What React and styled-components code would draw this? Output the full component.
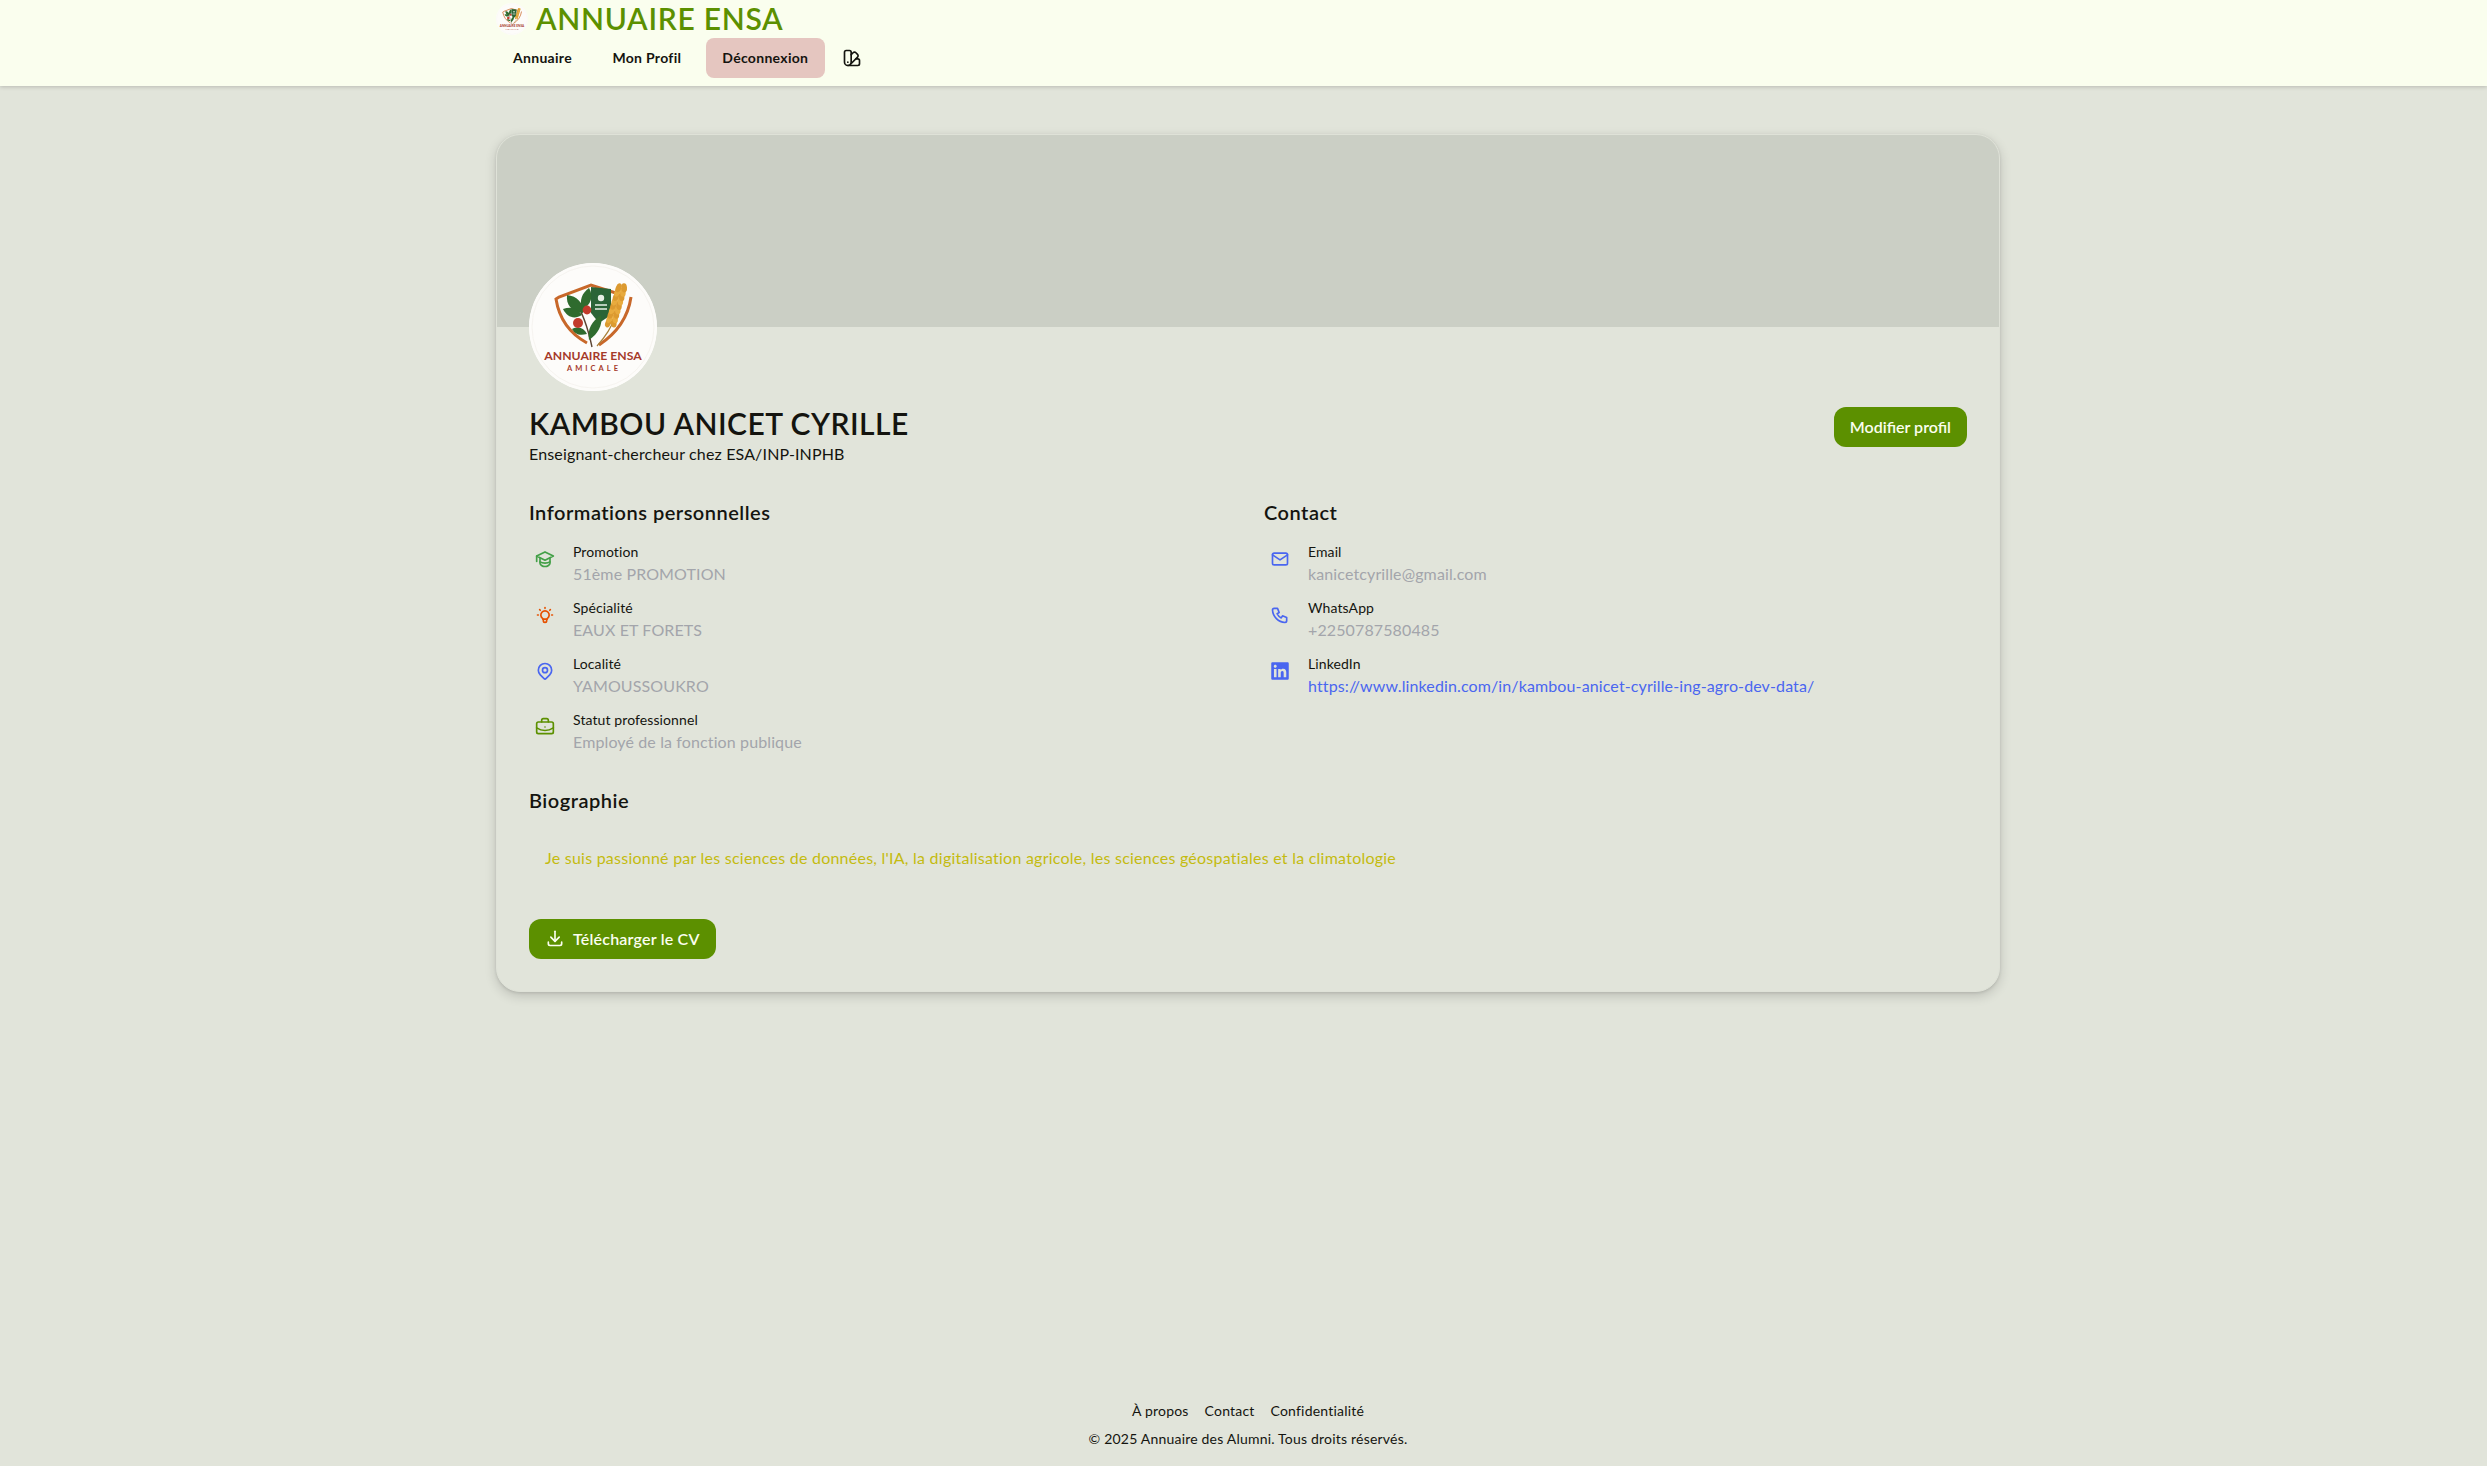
import React from "react";
import styled, { createGlobalStyle } from "styled-components";
import { SwatchBook, BriefcaseBusiness } from "lucide-react";
import { TbBulb, TbMapPin, TbMail, TbPhone, TbDownload } from "react-icons/tb";
import { FaLinkedin } from "react-icons/fa";

const GlobalStyle = createGlobalStyle`
  * { box-sizing: border-box; }
  body {
    margin: 0;
    background: #e1e4da;
    color: #14140f;
    font-family: "Lato", "Open Sans", sans-serif;
  }
`;

const Page = styled.div`
  min-height: 1466px;
  display: flex;
  flex-direction: column;
`;

const Navbar = styled.header`
  height: 86px;
  background: #fafeee;
  box-shadow: 0 1px 4px rgba(0, 0, 0, 0.18);
  padding: 0 487px 0 496px;
`;

const Brand = styled.div`
  height: 38px;
  display: flex;
  align-items: center;
  gap: 8px;
`;

const BrandLogo = styled.div`
  width: 32px;
  height: 32px;
  svg {
    display: block;
    width: 100%;
    height: 100%;
  }
`;

const BrandName = styled.span`
  font-size: 30px;
  font-weight: 600;
  line-height: 36px;
  padding-bottom: 2px;
  color: #5c9000;
  letter-spacing: 0.7px;
`;

const Menu = styled.nav`
  margin-left: 1px;
  display: flex;
  align-items: center;
  gap: 8.5px;
`;

const MenuItem = styled.a`
  height: 40px;
  padding: 0 ${(p) => (p.$danger ? "16.5px" : "16px")} 1px;
  border-radius: 8px;
  display: flex;
  align-items: center;
  font-size: 14px;
  font-weight: 700;
  letter-spacing: 0.3px;
  background: ${(p) => (p.$danger ? "#e5c6c0" : "transparent")};
`;

const ThemeButton = styled.span`
  margin-left: 9px;
  display: flex;
  color: #14140f;
`;

const Main = styled.main`
  flex: 1;
  padding: 48px 487px 0 496px;
`;

const Card = styled.section`
  background: #e1e4da;
  border: 1px solid #dfe2d8;
  border-radius: 24px;
  box-shadow: 0 4px 12px rgba(0, 0, 0, 0.16), 0 1px 3px rgba(0, 0, 0, 0.1);
  overflow: hidden;
`;

const Cover = styled.div`
  height: 192px;
  background: #cbcfc5;
`;

const CardBody = styled.div`
  padding: 0 32px 32px;
`;

const Avatar = styled.div`
  width: 128px;
  height: 128px;
  margin-top: -64px;
  border-radius: 50%;
  overflow: hidden;
  background: #fdfcfa;
  svg {
    display: block;
    width: 100%;
    height: 100%;
  }
`;

const ProfileHeader = styled.div`
  margin-top: 15px;
  display: flex;
  justify-content: space-between;
  align-items: flex-start;
`;

const Name = styled.h1`
  margin: 0 0 2px;
  font-size: 30px;
  font-weight: 600;
  line-height: 34px;
  letter-spacing: 0.45px;
`;

const Headline = styled.p`
  margin: 0 0 2px;
  font-size: 16px;
  line-height: 23px;
  letter-spacing: 0.15px;
`;

const Button = styled.a`
  height: 40px;
  padding: 0 16px 2px;
  border-radius: 12px;
  display: inline-flex;
  align-items: center;
  gap: 8px;
  background: #5c9000;
  color: #fbfeef;
  font-size: 16px;
  font-weight: 600;
  letter-spacing: ${(p) => p.$spacing || 0}px;
  margin-top: ${(p) => p.$top || 0}px;
`;

const Columns = styled.div`
  margin-top: 32px;
  display: grid;
  grid-template-columns: 1fr 1fr;
  gap: 32px;
`;

const SectionTitle = styled.h2`
  margin: 0 0 18px;
  font-size: 20px;
  font-weight: 600;
  line-height: 26px;
  letter-spacing: 0.5px;
`;

const InfoList = styled.div`
  display: flex;
  flex-direction: column;
  gap: 12px;
`;

const InfoRow = styled.div`
  display: flex;
  align-items: flex-start;
  gap: 12px;
`;

const InfoIcon = styled.span`
  width: 32px;
  height: 32px;
  flex: none;
  display: flex;
  align-items: center;
  justify-content: center;
  color: ${(p) => p.$color};
`;

const InfoText = styled.div`
  height: 44px;
  margin: -1px 0 1px;
`;

const InfoLabel = styled.div`
  font-size: 14px;
  line-height: 20px;
  letter-spacing: 0.1px;
`;

const InfoValue = styled.div`
  font-size: 16px;
  line-height: 24px;
  letter-spacing: 0.12px;
  color: ${(p) => p.$color || "#a3a5ab"};
`;

const Biography = styled.section`
  margin-top: 32px;
`;

const BioText = styled.p`
  margin: 0 0 32px;
  padding: 15px 16px 17px;
  font-size: 16px;
  line-height: 24px;
  letter-spacing: 0.24px;
  color: #c4bb10;
`;

const Footer = styled.footer`
  padding: 16px 0 17px 9px;
  display: flex;
  flex-direction: column;
  align-items: center;
  gap: 8px;
  font-size: 14px;
  line-height: 20px;
  letter-spacing: 0.2px;
`;

const FooterLinks = styled.div`
  display: flex;
  gap: 16px;
`;

const leaves = [
  "M54 50C42 48 37 42 38 32C48 33 55 40 54 50Z",
  "M53 47C50 37 53 30 60 25C65 33 62 42 53 47Z",
  "M53 52C45 57 38 54 34 46C42 43 49 45 53 52Z",
  "M60 77C58 66 63 58 72 52C74 62 69 71 60 77Z",
  "M58 71C50 73 46 71 43 66C50 63 55 65 58 71Z",
];

const grains = [0, 1, 2, 3, 4, 5, 6, 7, 8];

const LogoMark = () => (
  <svg viewBox="0 0 128 128" aria-hidden="true">
    <circle cx="64" cy="64" r="64" fill="#fdfcfa" />
    <circle cx="64" cy="64" r="61" fill="none" stroke="#f1efea" strokeWidth="0.6" />
    <path d="M58 80C40 70 30 55 27 36L30 34L62 22L90 31" fill="none" stroke="#c8682a" strokeWidth="3" />
    <path d="M70 82C88 70 99 55 102 34" fill="none" stroke="#c8682a" strokeWidth="3" />
    <path d="M62 24L82 26V52L70 60L62 50Z" fill="#2b6437" />
    <circle cx="72" cy="35" r="3.2" fill="#e8efe6" />
    <path d="M66 42H78M66 46H78" stroke="#e8efe6" strokeWidth="1.5" />
    <path d="M63 84C60 70 54 50 46 38" fill="none" stroke="#5b4432" strokeWidth="1.4" />
    {leaves.map((d) => (
      <path key={d} d={d} fill="#2f6b2e" />
    ))}
    <circle cx="58" cy="47" r="4.4" fill="#c23b2b" />
    <circle cx="49" cy="60" r="5" fill="#c23b2b" />
    <path d="M68 83C76 74 82 66 85 56" fill="none" stroke="#a9803a" strokeWidth="1.2" />
    {grains.map((i) => {
      const x = 82 + i * 1.3;
      const y = 60 - i * 4.4;
      return (
        <g key={i} fill={i % 2 ? "#e8ab3e" : "#dc9a30"}>
          <ellipse cx={x - 2.8} cy={y} rx="2.8" ry="4.6" transform={`rotate(24 ${x - 2.8} ${y})`} />
          <ellipse cx={x + 2.8} cy={y} rx="2.8" ry="4.6" transform={`rotate(-4 ${x + 2.8} ${y})`} />
        </g>
      );
    })}
    <text x="64" y="97" textAnchor="middle" fontFamily="Lato, sans-serif" fontWeight="700" fontSize="12.2" fill="#a53a2a">
      ANNUAIRE ENSA
    </text>
    <text x="65" y="107.5" textAnchor="middle" fontFamily="Lato, sans-serif" fontWeight="700" fontSize="7.5" letterSpacing="3" fill="#a53a2a">
      AMICALE
    </text>
  </svg>
);

const CapIcon = ({ size }) => (
  <svg width={size} height={size} viewBox="0 0 24 24" fill="none" stroke="currentColor" strokeWidth="2" strokeLinecap="round" strokeLinejoin="round">
    <path d="M12 3.5L22 8.5L12 13.5L2 8.5Z" />
    <path d="M6 11V17C6 19 9 21 12 21C15 21 18 19 18 17V11" />
    <path d="M2 8.5V15" />
    <path d="M6 15.5C9 17.5 15 17.5 18 15.5" />
  </svg>
);

const personal = [
  { icon: CapIcon, color: "#43a047", label: "Promotion", value: "51ème PROMOTION" },
  { icon: TbBulb, color: "#e65100", label: "Spécialité", value: "EAUX ET FORETS" },
  { icon: TbMapPin, color: "#4a66f0", label: "Localité", value: "YAMOUSSOUKRO" },
  { icon: BriefcaseBusiness, color: "#5c9000", label: "Statut professionnel", value: "Employé de la fonction publique" },
];

const contact = [
  { icon: TbMail, color: "#4a66f0", label: "Email", value: "kanicetcyrille@gmail.com" },
  { icon: TbPhone, color: "#4a66f0", label: "WhatsApp", value: "+2250787580485" },
  {
    icon: FaLinkedin,
    color: "#4a66f0",
    label: "LinkedIn",
    value: "https://www.linkedin.com/in/kambou-anicet-cyrille-ing-agro-dev-data/",
    valueColor: "#4a66f0",
  },
];

function Info({ rows }) {
  return (
    <InfoList>
      {rows.map(({ icon: Icon, color, label, value, valueColor }) => (
        <InfoRow key={label}>
          <InfoIcon $color={color}>
            <Icon size={20} />
          </InfoIcon>
          <InfoText>
            <InfoLabel>{label}</InfoLabel>
            <InfoValue $color={valueColor}>{value}</InfoValue>
          </InfoText>
        </InfoRow>
      ))}
    </InfoList>
  );
}

export default function App() {
  return (
    <>
      <GlobalStyle />
      <Page>
        <Navbar>
          <Brand>
            <BrandLogo>
              <LogoMark />
            </BrandLogo>
            <BrandName>ANNUAIRE ENSA</BrandName>
          </Brand>
          <Menu>
            <MenuItem>Annuaire</MenuItem>
            <MenuItem>Mon Profil</MenuItem>
            <MenuItem $danger>Déconnexion</MenuItem>
            <ThemeButton>
              <SwatchBook size={20} />
            </ThemeButton>
          </Menu>
        </Navbar>
        <Main>
          <Card>
            <Cover />
            <CardBody>
              <Avatar>
                <LogoMark />
              </Avatar>
              <ProfileHeader>
                <div>
                  <Name>KAMBOU ANICET CYRILLE</Name>
                  <Headline>Enseignant-chercheur chez ESA/INP-INPHB</Headline>
                </div>
                <Button $top={1}>Modifier profil</Button>
              </ProfileHeader>
              <Columns>
                <div>
                  <SectionTitle>Informations personnelles</SectionTitle>
                  <Info rows={personal} />
                </div>
                <div>
                  <SectionTitle>Contact</SectionTitle>
                  <Info rows={contact} />
                </div>
              </Columns>
              <Biography>
                <SectionTitle>Biographie</SectionTitle>
                <BioText>
                  Je suis passionné par les sciences de données, l'IA, la digitalisation agricole, les sciences géospatiales et la climatologie
                </BioText>
                <Button $spacing={0.2}>
                  <TbDownload size={20} />
                  Télécharger le CV
                </Button>
              </Biography>
            </CardBody>
          </Card>
        </Main>
        <Footer>
          <FooterLinks>
            <a>À propos</a>
            <a>Contact</a>
            <a>Confidentialité</a>
          </FooterLinks>
          <div>© 2025 Annuaire des Alumni. Tous droits réservés.</div>
        </Footer>
      </Page>
    </>
  );
}
